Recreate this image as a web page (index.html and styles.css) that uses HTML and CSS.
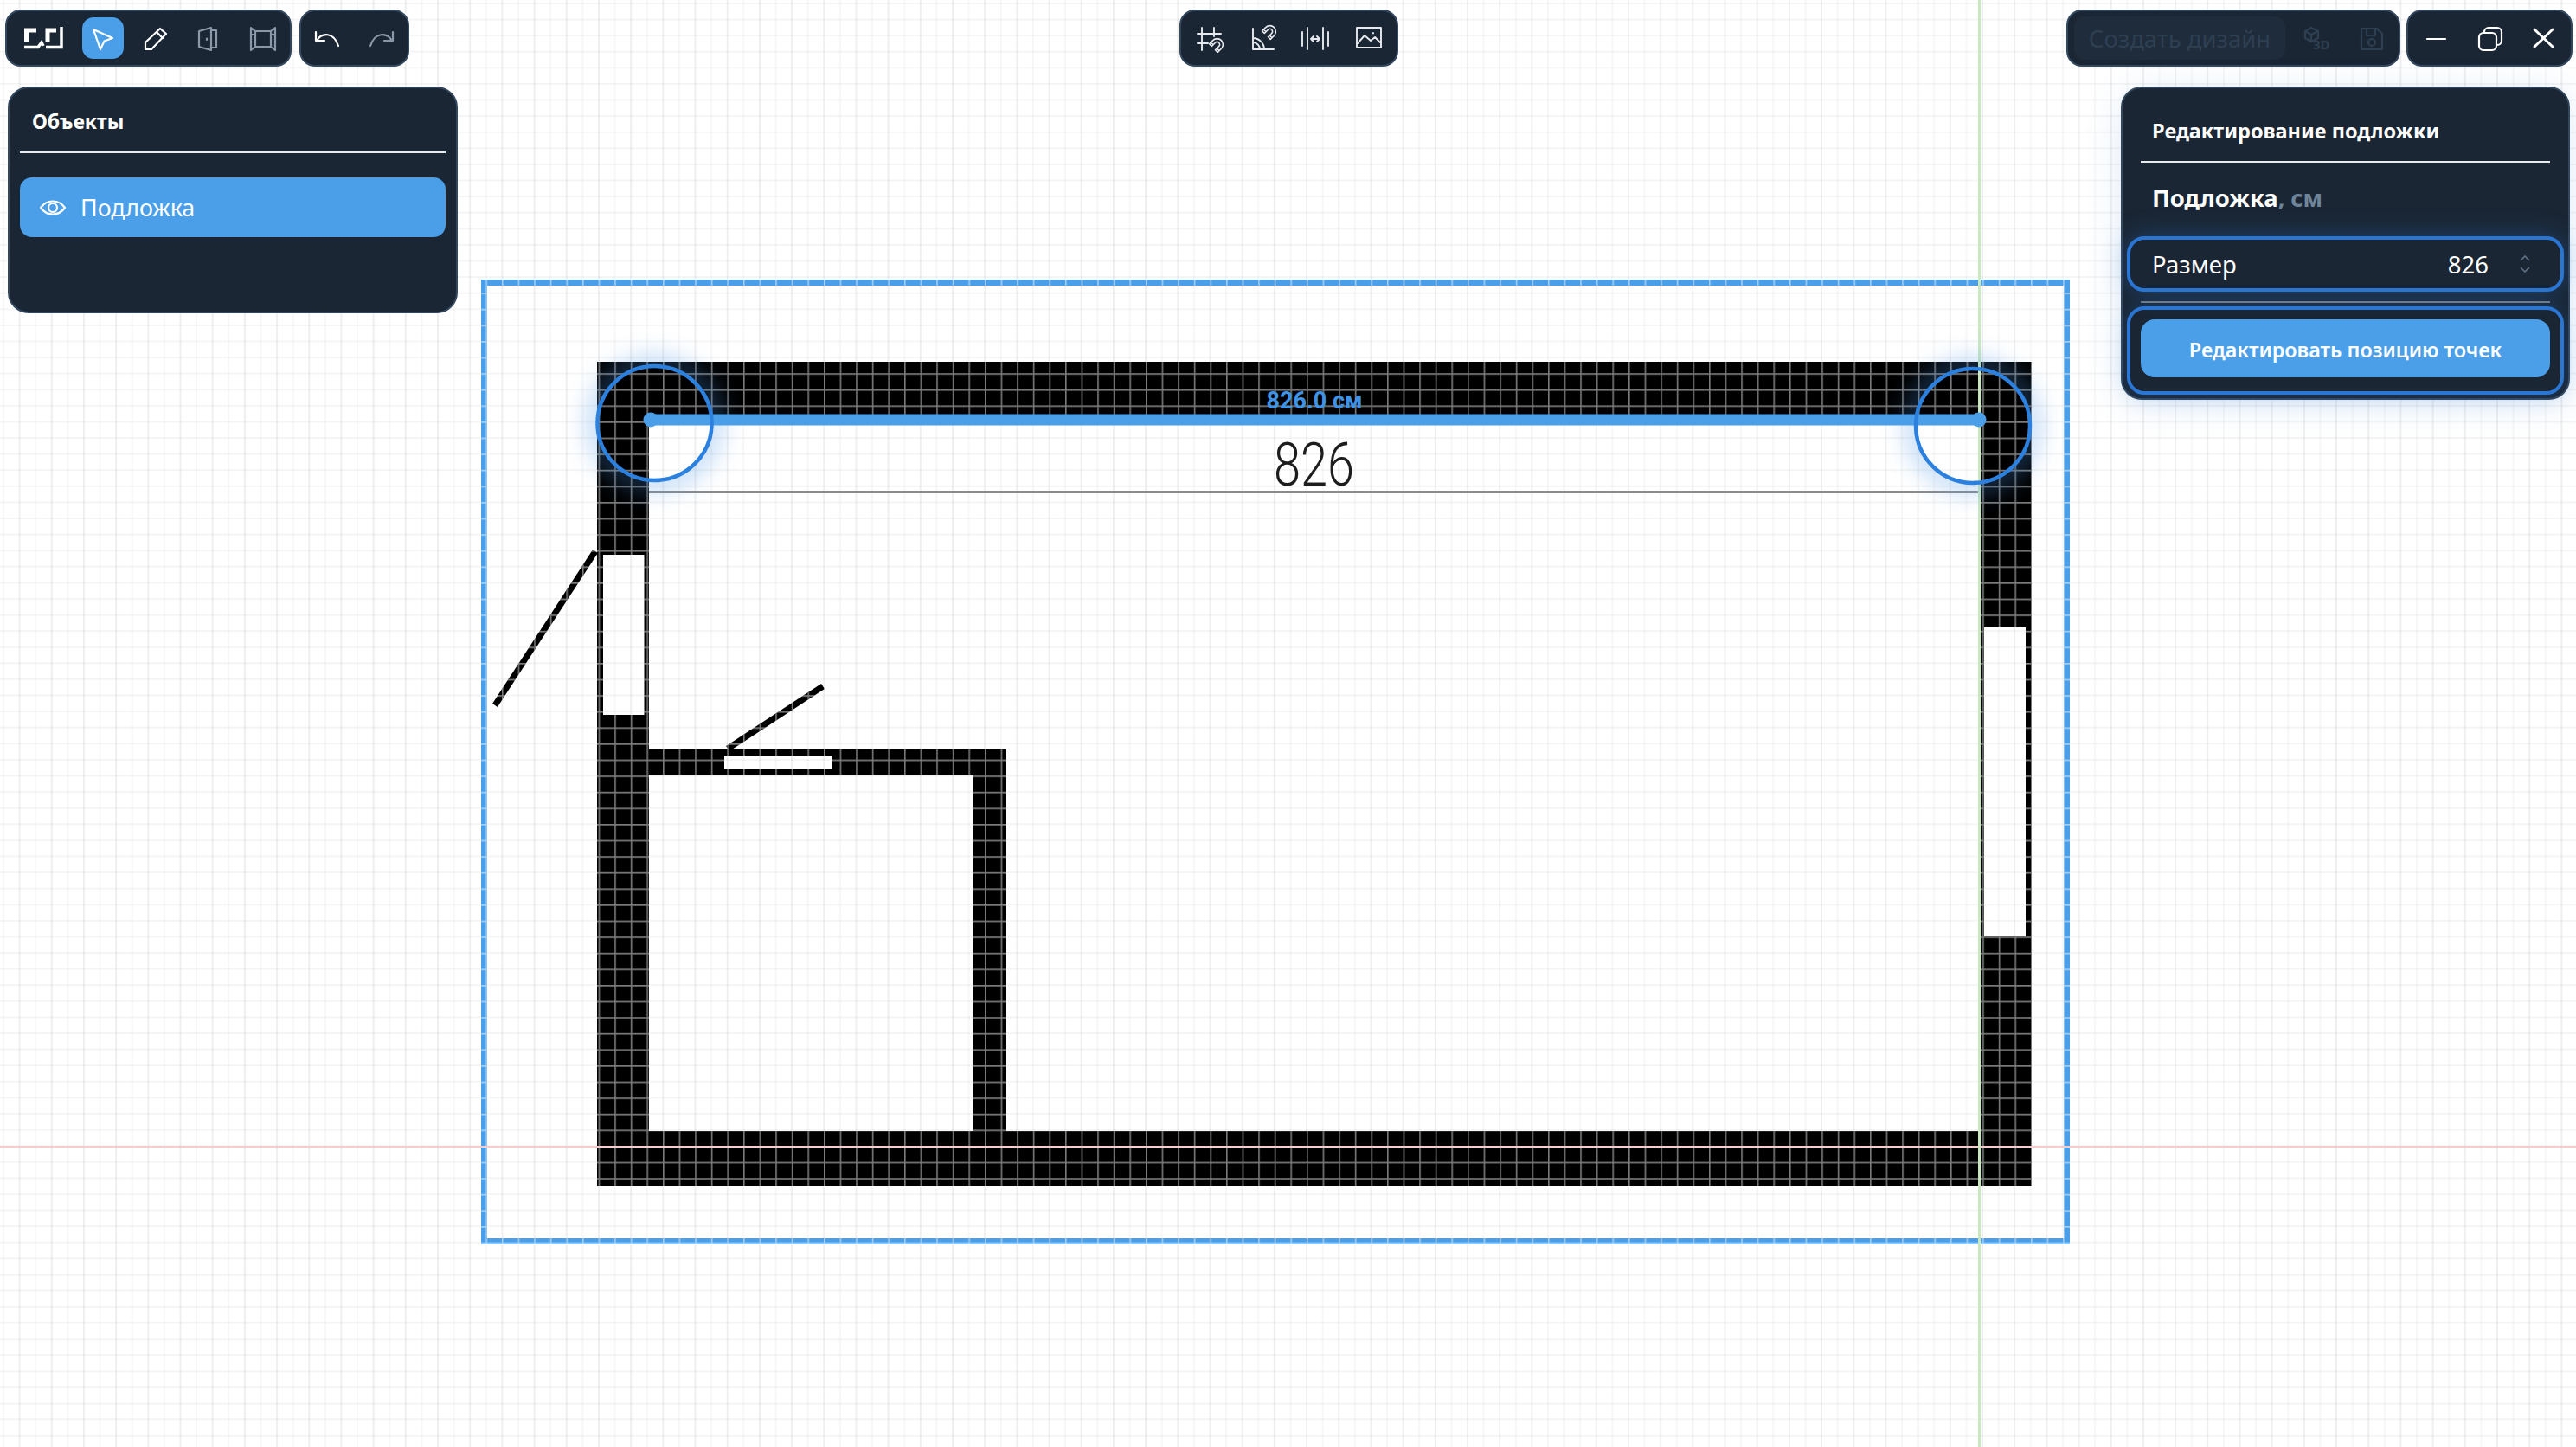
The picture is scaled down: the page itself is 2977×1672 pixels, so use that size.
FILE: index.html
```html
<!DOCTYPE html>
<html lang="ru">
<head>
    <meta charset="UTF-8">
    <title>Редактор плана</title>
    <link rel="stylesheet" href="styles.css">
</head>
<body>
<div class="app">
    <svg class="plan" width="2977" height="1672" viewBox="0 0 2977 1672">
        <defs>
            <pattern id="cellLines" patternUnits="userSpaceOnUse" x="3.4" y="3.4" width="18.6" height="18.6">
                <path class="cell-line" d="M0.8 0V18.6M0 0.8H18.6"/>
            </pattern>
            <path id="walls" fill-rule="evenodd" d="M690 418H2348V1370H690Z
                M750 488H2287V1307H1163V866H750Z
                M750 895H1125V1307H750Z
                M697 641H744.5V826H697Z
                M2293 725H2341V1082H2293Z
                M837 873H962V888H837Z"/>
            <path id="frame" fill-rule="evenodd" d="M556 323H2392V1438H556ZM563 330V1431H2385V330Z"/>
            <filter id="blur" x="-50%" y="-50%" width="200%" height="200%">
                <feGaussianBlur stdDeviation="14"/>
            </filter>
            <mask id="leftGlow" maskUnits="userSpaceOnUse" x="0" y="0" width="2977" height="1672">
                <rect width="2977" height="1672" fill="#fff"/>
                <circle cx="756.5" cy="489" r="64" fill="#000"/>
            </mask>
            <mask id="rightGlow" maskUnits="userSpaceOnUse" x="0" y="0" width="2977" height="1672">
                <rect width="2977" height="1672" fill="#fff"/>
                <circle cx="2280" cy="492" r="64" fill="#000"/>
            </mask>
        </defs>

        <use href="#walls" class="wall"/>
        <path class="door" d="M688 637L572 815"/>
        <path class="door" d="M841 865L951 793"/>
        <path class="measure" d="M750 568.5H2287"/>
        <use href="#frame" class="frame"/>

        <use href="#walls" fill="url(#cellLines)"/>
        <use href="#frame" fill="url(#cellLines)"/>
        <path class="door-cut" d="M688 637L572 815M841 865L951 793"/>

        <path class="axis-x" d="M0 1325H2977"/>
        <path class="axis-y" d="M2287.5 0V1672"/>

        <g mask="url(#leftGlow)"><circle class="glow" cx="756.5" cy="489" r="68" filter="url(#blur)"/></g>
        <g mask="url(#rightGlow)"><circle class="glow" cx="2280" cy="492" r="68" filter="url(#blur)"/></g>

        <path class="dim-line" d="M752 485H2287"/>
        <circle class="dim-dot" cx="752" cy="485" r="8.5"/>
        <circle class="dim-dot" cx="2287" cy="485" r="8.5"/>
        <circle class="handle" cx="756.5" cy="489" r="66"/>
        <circle class="handle" cx="2280" cy="492" r="66"/>

        <text class="dim-label" x="1519" y="472">826.0 см</text>
        <text class="drawn-size" x="1472" y="561" textLength="93" lengthAdjust="spacingAndGlyphs">826</text>
    </svg>

    <div class="ui">
        <header class="topbar">
            <div class="group">
                <div class="bar bar-tools">
                    <span class="btn btn-logo">
                        <svg class="logo" width="46" height="28" viewBox="0 0 46 28">
                            <path d="M3.5 18V5H15M28 18V5H38"/>
                            <path class="logo-thin" d="M44 1V24.5H26M1 24.5H17L21 19L23 23"/>
                        </svg>
                    </span>
                    <span class="btn btn-active">
                        <svg class="icon" viewBox="0 0 48 48"><path d="M13 14L35 24L25.5 27.5L21 37Z"/></svg>
                    </span>
                    <span class="btn">
                        <svg class="icon" viewBox="0 0 48 48"><path d="M12 37V29L29 13L36 19L19 37ZM25 17L32 24"/></svg>
                    </span>
                    <span class="btn btn-dim">
                        <svg class="icon" viewBox="0 0 48 48"><path d="M13 16L27 12V38L13 34ZM27 15H33V35H27"/><path d="M22 24.5V26"/></svg>
                    </span>
                    <span class="btn btn-dim">
                        <svg class="icon" viewBox="0 0 48 48"><path d="M17 16H35V34H17ZM12 12L17 16V34L12 38ZM40 12L35 16V34L40 38ZM12 20H17M35 20H40"/></svg>
                    </span>
                </div>
                <div class="bar bar-history">
                    <span class="btn">
                        <svg class="icon" viewBox="0 0 48 48"><path d="M10 17V27H20M11 27C17 17 31 17 36 33"/></svg>
                    </span>
                    <span class="btn btn-dim">
                        <svg class="icon" viewBox="0 0 48 48"><path d="M38 17V27H28M37 27C31 17 17 17 12 33"/></svg>
                    </span>
                </div>
            </div>

            <div class="bar bar-center">
                <span class="btn">
                    <svg class="icon icon-thin" viewBox="0 0 48 48">
                        <path d="M15 12V38M29 12V22M10 19H37M10 30H22"/>
                        <g transform="translate(32 32) rotate(45) scale(0.85)"><path d="M-8 6V-1A8 8 0 0 1 8 -1V6H3.5V-1A3.5 3.5 0 0 0 -3.5 -1V6ZM-8 3H-3.5M3.5 3H8"/></g>
                    </svg>
                </span>
                <span class="btn">
                    <svg class="icon icon-thin" viewBox="0 0 48 48">
                        <path d="M13 13V37H37M13 24A13 13 0 0 1 26 37M13 29A8 8 0 0 1 21 37"/>
                        <g transform="translate(32 17) rotate(45) scale(0.85)"><path d="M-8 6V-1A8 8 0 0 1 8 -1V6H3.5V-1A3.5 3.5 0 0 0 -3.5 -1V6ZM-8 3H-3.5M3.5 3H8"/></g>
                    </svg>
                </span>
                <span class="btn">
                    <svg class="icon icon-thin" viewBox="0 0 48 48"><path d="M9 17V33M15 12V37M33 12V37M39 17V33M19 25H29M22 22L19 25L22 28M26 22L29 25L26 28"/></svg>
                </span>
                <span class="btn">
                    <svg class="icon icon-thin" viewBox="0 0 48 48"><path d="M11 12H39V35H11ZM12 30L20 21L27 27L32 23L38 29M30 18V18.5"/></svg>
                </span>
            </div>

            <div class="group group-end">
                <div class="bar bar-create">
                    <span class="create-btn">Создать дизайн</span>
                    <span class="btn btn-off">
                        <svg class="icon" viewBox="0 0 48 48">
                            <path d="M17 12L25 16V24L17 28L10 24V16ZM10 16L17 20L25 16M17 20V28"/>
                            <text class="mark-3d" x="19" y="37">3D</text>
                        </svg>
                    </span>
                    <span class="btn btn-off">
                        <svg class="icon" viewBox="0 0 48 48"><path d="M14 13H32L38 19V37H14ZM20 13V21H30V13"/><circle cx="26" cy="29" r="4"/></svg>
                    </span>
                </div>
                <div class="bar bar-window">
                    <span class="btn">
                        <svg class="icon" viewBox="0 0 48 48"><path d="M14 25H35"/></svg>
                    </span>
                    <span class="btn">
                        <svg class="icon" viewBox="0 0 48 48"><rect x="12" y="18" width="20" height="20" rx="5"/><path d="M18 18V17A5 5 0 0 1 23 12H33A5 5 0 0 1 38 17V27A5 5 0 0 1 33 32H32"/></svg>
                    </span>
                    <span class="btn">
                        <svg class="icon icon-bold" viewBox="0 0 48 48"><path d="M14 14L35 34M35 14L14 34"/></svg>
                    </span>
                </div>
            </div>
        </header>

        <div class="panels">
            <aside class="panel panel-objects">
                <h3 class="panel-title">Объекты</h3>
                <div class="object-row">
                    <svg class="eye" width="30" height="20" viewBox="0 0 30 20">
                        <path d="M1 10C8 0 22 0 29 10C22 20 8 20 1 10Z"/>
                        <circle cx="15" cy="10" r="5"/>
                    </svg>
                    <span>Подложка</span>
                </div>
            </aside>

            <aside class="panel panel-edit">
                <h3 class="panel-title">Редактирование подложки</h3>
                <div class="section-title">Подложка<span class="unit">, см</span></div>
                <div class="field">
                    <span class="field-label">Размер</span>
                    <span class="field-value">826</span>
                    <svg class="spin" width="14" height="20" viewBox="0 0 14 20">
                        <path d="M2 6L7 1L12 6M2 14L7 19L12 14"/>
                    </svg>
                </div>
                <div class="field-divider"></div>
                <div class="action-box">
                    <button class="action-btn" type="button">Редактировать позицию точек</button>
                </div>
            </aside>
        </div>
    </div>
</div>
</body>
</html>
```

FILE: styles.css
```css
* {
    box-sizing: border-box;
}

html, body {
    margin: 0;
    padding: 0;
}

body {
    background-color: #fff;
    font-family: "Noto Sans", "Open Sans", sans-serif;
    color: #fff;
    overflow: hidden;
}

.app {
    position: relative;
    width: 2977px;
    height: 1672px;
    overflow: hidden;
    background-color: #fff;
    background-image:
        linear-gradient(to right, rgba(0, 0, 0, 0.03) 2px, transparent 2px),
        linear-gradient(to right, rgba(0, 0, 0, 0.032) 2px, transparent 2px),
        linear-gradient(to bottom, rgba(0, 0, 0, 0.04) 2px, transparent 2px);
    background-size: 37.2px 100%, 18.6px 100%, 100% 18.6px;
    background-position: 21.6px 0, 3px 0, 0 3px;
}

/* drawing */
.plan {
    position: absolute;
    left: 0;
    top: 0;
}

.wall {
    fill: #000;
}

.door {
    fill: none;
    stroke: #000;
    stroke-width: 7;
}

.door-cut {
    fill: none;
    stroke: url(#cellLines);
    stroke-width: 7;
}

.measure {
    stroke: #8b8b8b;
    stroke-width: 3;
}

.frame {
    fill: #4a9fe8;
}

.cell-line {
    fill: none;
    stroke: rgba(255, 255, 255, 0.48);
    stroke-width: 1.6;
}

.axis-x {
    stroke: #f7cccc;
    stroke-width: 2;
}

.axis-y {
    stroke: #c9e8c2;
    stroke-width: 3;
}

.glow {
    fill: none;
    stroke: rgba(74, 150, 232, 0.55);
    stroke-width: 14;
}

.dim-line {
    stroke: #4a9fe8;
    stroke-width: 13;
}

.dim-dot {
    fill: #4a9fe8;
}

.handle {
    fill: none;
    stroke: #2c80de;
    stroke-width: 4.5;
}

.dim-label {
    fill: #3f93e6;
    font-family: "Roboto", sans-serif;
    font-size: 27px;
    font-weight: 700;
    text-anchor: middle;
}

.drawn-size {
    fill: #1d1d1d;
    font-family: "Roboto", sans-serif;
    font-size: 70px;
    font-weight: 300;
}

/* interface */
.ui {
    position: relative;
    display: flex;
    flex-direction: column;
    gap: 23px;
}

.topbar {
    display: grid;
    grid-template-columns: 1fr auto 1fr;
    padding: 11px 4px 0 6px;
}

.group {
    display: flex;
    gap: 9px;
}

.group-end {
    justify-content: flex-end;
    gap: 7px;
}

.bar {
    display: flex;
    align-items: center;
    height: 66px;
    gap: 13px;
    padding: 0 7px;
    background: #1a2634;
    border: 2px solid #33475e;
    border-radius: 18px;
}

.bar-tools {
    padding-left: 18px;
    padding-right: 9px;
}

.bar-center {
    padding: 0 9px;
}

.bar-create {
    padding: 0 9px 0 7px;
    gap: 13px;
}

.bar-window {
    padding: 0 8px;
    gap: 14px;
}

.btn {
    display: flex;
    align-items: center;
    justify-content: center;
    width: 48px;
    height: 48px;
    border-radius: 13px;
    color: #fff;
}

.btn-logo {
    margin-right: 8px;
}

.btn-active {
    background: #4a9fe8;
}

.btn-dim {
    color: #8a98a8;
}

.btn-off {
    color: #2f3f52;
}

.icon {
    width: 48px;
    height: 48px;
    fill: none;
    stroke: currentColor;
    stroke-width: 2.2;
    stroke-linejoin: round;
    stroke-linecap: round;
}

.icon-thin {
    stroke-width: 1.9;
    color: #e6eaee;
}

.icon-bold {
    stroke-width: 3;
}

.mark-3d {
    fill: currentColor;
    stroke: none;
    font-family: "Noto Sans", sans-serif;
    font-size: 15px;
    font-weight: 700;
}

.logo {
    fill: none;
    stroke: #fff;
    stroke-width: 5;
}

.logo-thin {
    stroke-width: 3.5;
}

.create-btn {
    display: flex;
    align-items: center;
    justify-content: center;
    width: 244px;
    height: 50px;
    border-radius: 12px;
    background: #1f2c3b;
    color: #2f3f52;
    font-size: 27.5px;
}

.panels {
    display: flex;
    justify-content: space-between;
    align-items: flex-start;
    padding: 0 7px 0 9px;
}

.panel {
    width: 520px;
    background: #1a2634;
    border: 2px solid #33475e;
    border-radius: 24px;
}

.panel-objects {
    height: 262px;
    padding: 12px;
}

.panel-title {
    margin: 0;
    font-size: 23px;
    font-weight: 700;
    border-bottom: 2px solid #e8eaec;
}

.panel-objects .panel-title {
    height: 63px;
    padding: 8px 14px 0;
    line-height: 36px;
}

.object-row {
    display: flex;
    align-items: center;
    gap: 17px;
    height: 69px;
    margin-top: 28px;
    padding-left: 23px;
    background: #4a9fe8;
    border-radius: 14px;
    font-size: 26.8px;
}

.eye {
    fill: none;
    stroke: #fff;
    stroke-width: 2.2;
}

.panel-edit {
    width: 519px;
    height: 362px;
    padding: 0 5px;
    box-shadow: 0 6px 40px rgba(60, 130, 210, 0.16);
}

.panel-edit .panel-title {
    margin: 0 16px;
    padding: 31px 13px 17px;
    line-height: 36px;
    font-size: 23.5px;
}

.section-title {
    display: flex;
    align-items: center;
    height: 85px;
    padding: 0 0 5px 29px;
    font-size: 27.4px;
    font-weight: 700;
}

.unit {
    color: #6f8599;
    font-size: 27px;
    white-space: pre;
}

.field {
    display: flex;
    align-items: center;
    height: 64px;
    padding: 0 34px 0 25px;
    border: 4px solid #2a76d2;
    border-radius: 20px;
    background: #1a2634;
    box-shadow: 0 0 30px rgba(42, 118, 210, 0.35);
    font-size: 27.5px;
}

.field-label {
    flex: 1;
}

.field-value {
    margin-right: 35px;
}

.spin {
    fill: none;
    stroke: #5f7286;
    stroke-width: 1.6;
}

.field-divider {
    height: 2px;
    margin: 11px 16px 4px;
    background: #6d7c8d;
    position: relative;
}

.action-box {
    height: 102px;
    padding: 11px 12px;
    border: 4px solid #2a76d2;
    border-radius: 20px;
    box-shadow: 0 0 24px rgba(42, 118, 210, 0.28);
}

.action-btn {
    display: block;
    width: 100%;
    height: 67px;
    padding: 2px 0 0;
    border: 0;
    border-radius: 16px;
    background: #4a9fe8;
    color: #fff;
    font-family: inherit;
    font-size: 23.4px;
    font-weight: 600;
}
```
